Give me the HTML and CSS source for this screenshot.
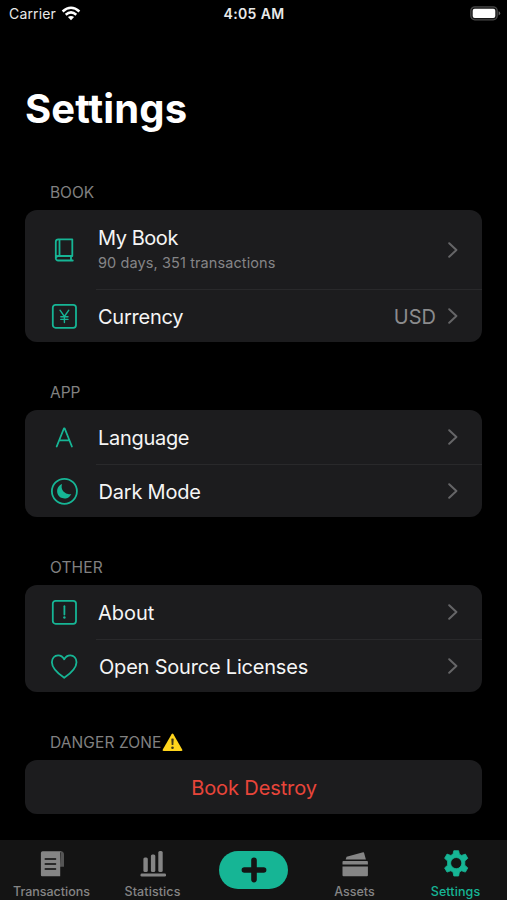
FILE: index.html
```html
<!DOCTYPE html>
<html lang="en">
<head>
<meta charset="utf-8">
<title>Settings</title>
<link rel="stylesheet" href="styles.css">
</head>
<body>
<div class="screen">
  <header class="status">
    <div class="carrier"><span>Carrier</span>
      <svg class="wifi" width="20" height="15" viewBox="0 0 20 15" fill="none" stroke="#fff" stroke-width="2.5"><path d="M1.6 5.5Q10-1.9 18.4 5.5M4.7 8.7Q10 4.1 15.3 8.7"/><path d="M10 14.2 6.9 11.1Q10 8.7 13.1 11.1Z" fill="#fff" stroke="none"/></svg>
    </div>
    <div class="time">4:05 AM</div>
    <svg class="battery" width="31" height="15" viewBox="0 0 31 15"><rect x=".8" y=".8" width="26.4" height="13" rx="4" fill="#161616" stroke="#484848" stroke-width="1.3"/><rect x="2.7" y="2.7" width="22.6" height="9.2" rx="2" fill="#fff"/><path d="M28.6 5.2q1.6.5 1.6 2.1t-1.6 2.1z" fill="#666"/></svg>
  </header>
  <h1>Settings</h1>
  <main>
    <section>
      <h2>BOOK</h2>
      <div class="card">
        <div class="row tall">
          <svg class="icon" viewBox="0 0 28 28"><path d="M8.2 3.3H22.3V20H8.2a2.4 2.4 0 0 0-2.4 2.4V5.7a2.4 2.4 0 0 1 2.4-2.4ZM9.5 3.3V20M5.8 22.2a2.3 2.3 0 0 0 2.4 2.3h14.6M21 20v4.5"/></svg>
          <div class="label"><div class="mybook">My Book</div><div class="sub">90 days, 351 transactions</div></div>
          <svg class="chev" viewBox="0 0 10 16"><path d="m1.2 1.2 7.2 6.8-7.2 6.8"/></svg>
        </div>
        <div class="row">
          <svg class="icon" viewBox="0 0 28 28"><rect x="2.8" y="2.8" width="23.2" height="23" rx="2.8"/><path class="thin" d="m10 8.2 4.4 6.3 4.4-6.3M14.4 14.5v6M10.8 14.7h7.2M10.8 17.4h7.2"/></svg>
          <div class="label currency">Currency</div><span class="value">USD</span>
          <svg class="chev" viewBox="0 0 10 16"><path d="m1.2 1.2 7.2 6.8-7.2 6.8"/></svg>
        </div>
      </div>
    </section>
    <section>
      <h2>APP</h2>
      <div class="card">
        <div class="row">
          <svg class="icon" viewBox="0 0 28 28"><path d="m6.7 23.5 7.2-18h.8l7.2 18M9.2 17.4h10"/></svg>
          <div class="label language">Language</div>
          <svg class="chev" viewBox="0 0 10 16"><path d="m1.2 1.2 7.2 6.8-7.2 6.8"/></svg>
        </div>
        <div class="row">
          <svg class="icon" viewBox="0 0 28 28"><circle cx="14.4" cy="14.3" r="12.5"/><path class="solid" d="M12.1 7.1a7.4 7.4 0 1 0 9.2 9.9A7.6 7.6 0 0 1 12.1 7.1Z"/></svg>
          <div class="label dark">Dark Mode</div>
          <svg class="chev" viewBox="0 0 10 16"><path d="m1.2 1.2 7.2 6.8-7.2 6.8"/></svg>
        </div>
      </div>
    </section>
    <section>
      <h2 class="other">OTHER</h2>
      <div class="card">
        <div class="row">
          <svg class="icon" viewBox="0 0 28 28"><rect x="2.8" y="2.8" width="23.2" height="23" rx="2.8"/><path d="M14.4 8.2v8.4"/><circle class="solid" cx="14.4" cy="19.5" r="1.2"/></svg>
          <div class="label about">About</div>
          <svg class="chev" viewBox="0 0 10 16"><path d="m1.2 1.2 7.2 6.8-7.2 6.8"/></svg>
        </div>
        <div class="row">
          <svg class="icon" viewBox="0 0 28 28"><path d="M14.2 25.8C8.4 21.8 1.9 16.4 1.9 10.2c0-4 2.7-6.9 6.2-6.9 2.7 0 4.8 1.5 6.1 4 1.3-2.5 3.4-4 6.1-4 3.5 0 6.2 2.9 6.2 6.9 0 6.2-6.5 11.6-12.3 15.6Z"/></svg>
          <div class="label licenses">Open Source Licenses</div>
          <svg class="chev" viewBox="0 0 10 16"><path d="m1.2 1.2 7.2 6.8-7.2 6.8"/></svg>
        </div>
      </div>
    </section>
    <section>
      <h2 class="danger">DANGER ZONE<svg class="warning" width="21" height="19" viewBox="0 0 21 19"><path d="M9.6 1.2q.9-1.4 1.8 0l8.8 15.2q.8 1.6-1 1.6H1.8q-1.8 0-1-1.6Z" fill="#ffd51c"/><path d="M9.3 5.8q1.2-.8 2.4 0L11.3 12h-1.6Z" fill="#403719"/><circle cx="10.5" cy="14.8" r="1.3" fill="#403719"/></svg></h2>
      <div class="card"><div class="row destroy">Book Destroy</div></div>
    </section>
  </main>
  <nav>
    <div class="tab"><svg class="receipt" width="28" height="28" viewBox="0 0 28 28"><path d="M22 2.2q3 .3 3 3.2v12.4h-4Z" fill="#555"/><path fill="#858585" d="M3.6 2.2h19q-1.4.5-1.4 2.3v22.7H3Q1.9 27.2 1.9 26V3.9q0-1.7 1.7-1.7Z"/><path d="M6.4 10h10M6.4 15h10M6.4 20h10" stroke="#292929" stroke-width="1.8" stroke-linecap="round"/></svg><span class="t1">Transactions</span></div>
    <div class="tab"><svg width="28" height="28" viewBox="0 0 28 28" fill="#858585"><rect x="4.4" y="8.5" width="4.4" height="14.5" rx="1.5"/><rect x="11.9" y="5.5" width="4.4" height="17.5" rx="1.5"/><rect x="19.3" y="2.1" width="4.4" height="20.9" rx="1.5"/><rect x="1.5" y="24.4" width="25.5" height="3.2" rx="1.3"/></svg><span class="t2">Statistics</span></div>
    <div class="add"><svg width="26" height="26" viewBox="0 0 26 26"><path d="M13 3.4v19.2M3.4 13h19.2" stroke="#141414" stroke-width="5.6" stroke-linecap="round"/></svg></div>
    <div class="tab"><svg width="28" height="28" viewBox="0 0 28 28" fill="#858585"><path d="m4.6 10.4 1-2.6 16.5-4.5q.8-.2 1 .6l1.8 6.5ZM2.3 12.1h23.8q.8 0 .8.8v2.7H1.5v-2.7q0-.8.8-.8ZM1.5 17.5h25.4v8.7q0 1-1 1H2.5q-1 0-1-1Z"/></svg><span class="t3">Assets</span></div>
    <div class="tab active"><svg width="28" height="28" viewBox="0 0 28 28"><path fill="#16b595" stroke="#16b595" stroke-width=".8" stroke-linejoin="round" fill-rule="evenodd" d="M11.8 1.7h4.8l.8 3.5 2.2 1.2 3.8-1.3 2.4 4.2-3 2.7v4.2l3 2.7-2.4 4.2-3.8-1.3-2.2 1.2-.8 4h-4.8l-.8-4-2.2-1.2L5 23.1l-2.4-4.2 3-2.7V12l-3-2.7L5 5.1l3.8 1.3L11 5.2ZM14.2 8.5a5.6 5.6 0 1 0 0 11.2 5.6 5.6 0 0 0 0-11.2Z"/></svg><span class="t4">Settings</span></div>
  </nav>
</div>
</body>
</html>
```

FILE: styles.css
```css
* { box-sizing: border-box; }
body { margin: 0; background: #000; color: #f5f5f5; font-family: Inter, "Liberation Sans", sans-serif; }
.screen { width: 507px; height: 900px; display: flex; flex-direction: column; overflow: hidden; background: #000; }
.status { height: 28px; flex: none; display: grid; grid-template-columns: 1fr auto 1fr; align-items: center; padding: 0 6px 0 9px; color: #e9e9e9; font-size: 14px; line-height: 28px; }
.carrier { display: flex; align-items: center; gap: 5px; letter-spacing: .15px; }
.wifi { margin-top: -2px; }
.time { font-weight: 600; letter-spacing: .35px; margin-right: 2px; }
.battery { justify-self: end; margin-top: -2px; }
h1 { margin: 57px 0 0 25px; height: 48px; line-height: 48px; font-size: 40px; font-weight: 700; letter-spacing: .1px; color: #fff; }
main { flex: 1; min-height: 0; padding: 42.4px 25px 0; }
h2 { display: flex; align-items: center; height: 35px; margin: 0; padding: 0 25px; line-height: 35px; font-size: 15.5px; font-weight: 400; letter-spacing: -.05px; color: #818181; }
h2.other { letter-spacing: .1px; }
h2.danger { letter-spacing: .1px; }
.card { background: #1c1c1e; border-radius: 12px; overflow: hidden; margin-bottom: 33px; }
.row { position: relative; height: 53.5px; display: flex; align-items: center; padding: 0 24px 0 25px; font-size: 20px; }
.row.tall { height: 78.5px; }
.row + .row::before { content: ""; position: absolute; top: 0; left: 71px; right: 0; height: 1px; background: #29292b; }
.icon { width: 28px; height: 28px; flex: none; fill: none; stroke: #16b595; stroke-width: 1.8; stroke-linejoin: round; stroke-linecap: round; }
.icon .thin { stroke-width: 1.4; }
.icon .solid { fill: #16b595; stroke: none; }
.label { flex: 1; margin-left: 20px; padding-top: 2px; line-height: 26px; white-space: nowrap; }
.label:has(.sub) { padding: 0; }
.mybook { letter-spacing: -.45px; line-height: 25px; }
.currency { letter-spacing: -.25px; }
.language { letter-spacing: -.3px; }
.dark { letter-spacing: -.2px; padding-left: .5px; }
.licenses { letter-spacing: -.2px; padding-left: 1px; }
.sub { color: #858587; font-size: 14.5px; line-height: 23px; letter-spacing: .1px; }
.value { color: #8b8b8d; margin-right: 12px; padding-top: 2px; }
.chev { width: 10px; height: 16px; fill: none; stroke: #656567; stroke-width: 2; stroke-linecap: round; stroke-linejoin: round; }
.warning { margin-left: 1px; }
.row.destroy { justify-content: center; padding-top: 2px; color: #e8453a; letter-spacing: -.1px; }
nav { height: 60.5px; flex: none; display: grid; grid-template-columns: repeat(5, 1fr); background: #141414; padding: 9px 1px 0; }
.tab { display: flex; flex-direction: column; align-items: center; font-size: 12.5px; line-height: 18px; font-weight: 500; color: #858585; }
.tab span { margin-top: 6px; }
.receipt { margin-left: 2px; }
.t2 { letter-spacing: .1px; }
.t4 { letter-spacing: .1px; }
.tab.active { color: #16b595; }
.add { justify-self: center; width: 69px; height: 38px; margin-top: 2px; border-radius: 19px; background: #16b595; display: flex; align-items: center; justify-content: center; }
```
